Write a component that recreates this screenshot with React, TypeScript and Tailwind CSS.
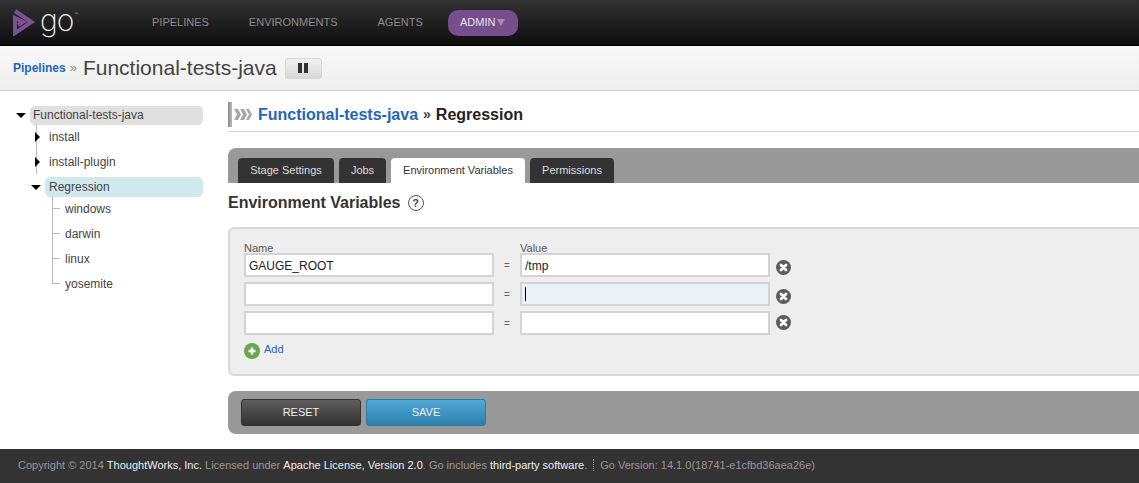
import React from "react";

const font = { fontFamily: '"Liberation Sans", Arial, sans-serif' };

function Down({ className = "" }: { className?: string }) {
  return <svg width="10" height="5" viewBox="0 0 10 5" className={className}><path d="M0 0H10L5 5Z" fill="#000" /></svg>;
}
function Right() {
  return <svg width="5" height="10" viewBox="0 0 5 10"><path d="M0 0L5 5L0 10Z" fill="#000" /></svg>;
}
function Close() {
  return (
    <svg width="15" height="15" viewBox="0 0 15 15" className="shrink-0">
      <circle cx="7.5" cy="7.5" r="7.5" fill="#5c5c5c" />
      <path d="M5 5L10 10M10 5L5 10" stroke="#fff" strokeWidth="2.8" strokeLinecap="round" />
    </svg>
  );
}
function Leaf({ label, last }: { label: string; last?: boolean }) {
  return (
    <div className="relative h-[25px] pl-[13px] flex items-center text-[12px] text-[#444]">
      <span className={`absolute left-0 top-0 w-px bg-[#bbb] ${last ? "h-[13px]" : "h-full"}`} />
      <span className="absolute left-0 top-[12px] w-[8px] h-px bg-[#bbb]" />
      {label}
    </div>
  );
}
function Row({ name = "", value = "", focus = false, className = "", iconUp = false }: { name?: string; value?: string; focus?: boolean; className?: string; iconUp?: boolean }) {
  const input = "w-[250px] h-[24px] border-2 border-[#d4d4d4] pl-[3px] flex items-center text-[12px] text-[#222]";
  return (
    <div className={`flex items-center ${className}`}>
      <div className={`${input} bg-white`}><span className="mt-[2px]">{name}</span></div>
      <div className="w-[26px] text-center text-[10px] text-[#666]">=</div>
      <div className={`${input} ${focus ? "bg-[#eaf2f9] border-[#ccd2d6]" : "bg-white"}`}>
        {focus ? <span className="w-px h-[14px] bg-black" /> : <span className="mt-[2px]">{value}</span>}
      </div>
      <div className={`ml-[6px] flex ${iconUp ? "-mt-[2px]" : "mt-[5px]"}`}><Close /></div>
    </div>
  );
}
function Tab({ label, active, w }: { label: string; active?: boolean; w: string }) {
  return (
    <div className={`h-[25px] rounded-t-[4px] flex items-center justify-center text-[11px] ${w} ${active ? "bg-white text-[#333]" : "bg-[#333] text-[#ddd]"}`}>
      {label}
    </div>
  );
}

export default function App() {
  return (
    <div style={font} className="w-[1139px] h-[483px] overflow-hidden bg-white flex flex-col">
      <header className="h-[46px] shrink-0 bg-gradient-to-b from-[#323232] to-[#0f0f0f] border-b border-[#000] flex items-center relative">
        <svg width="24" height="28" viewBox="0 0 24 28" className="ml-[12px] mt-[-1px]">
          <path d="M3 3L19.5 14L3 25V10L11 14L6 17" fill="none" stroke="#7b5391" strokeWidth="4" />
        </svg>
        <span className="ml-[4px] -mt-[6px] w-[34px] text-[30px] leading-none text-[#f0f0f0] tracking-[-1px] font-['Inter'] font-extralight">go</span>
        <span className="self-start mt-[11px] w-[4px] text-[4px] text-[#aaa]">™</span>
        <nav className="flex items-center text-[11px] text-[#8d8d8d]">
          <span className="ml-[74px]">PIPELINES</span>
          <span className="ml-[40px]">ENVIRONMENTS</span>
          <span className="ml-[40px]">AGENTS</span>
          <span className="ml-[25px] w-[70px] h-[26px] rounded-[10px] bg-[#764e8c] text-[#e8e0ec] flex items-center justify-center gap-[2px]">
            ADMIN
            <svg width="8" height="7" viewBox="0 0 8 7"><path d="M0 0H8L4 7Z" fill="#a58ab4" /></svg>
          </span>
        </nav>
      </header>

      <div className="h-[45px] shrink-0 bg-gradient-to-b from-[#f9f9f9] to-[#eeeeee] border-b border-[#cfcfcf] flex items-center pl-[13px] relative">
        <span className="text-[12px] font-bold text-[#1f66b9]">Pipelines</span>
        <span className="ml-[4px] text-[13px] text-[#888]">»</span>
        <span className="ml-[6px] text-[21px] text-[#444]">Functional-tests-java</span>
        <span className="ml-[8px] w-[37px] h-[21px] rounded-[3px] border border-[#d6d6d6] bg-gradient-to-b from-[#f2f2f2] to-[#d8d8d8] flex items-center justify-center gap-[2px]">
          <span className="w-[4px] h-[10px] bg-[#333]" />
          <span className="w-[4px] h-[10px] bg-[#333]" />
        </span>
      </div>

      <div className="flex-1 flex min-h-0">
        <aside className="w-[228px] shrink-0 pt-[15px] pl-[16px]">
          <div className="flex items-center w-[187px]">
            <Down className="shrink-0" />
            <div className="ml-[4px] w-[173px] h-[19px] rounded-[5px] bg-[#e0e0e0] pl-[3px] pb-[2px] flex items-center text-[12px] text-[#444]">Functional-tests-java</div>
          </div>
          <div className="relative -mt-[1px] ml-[20px] w-[167px]">
            <span className="absolute left-0 top-0 h-[50px] w-px bg-[#bbb]" />
            <div className="relative h-[25px] flex items-center pl-[13px] text-[12px] text-[#444]">
              <span className="absolute -left-[1px] top-[8px] flex"><Right /></span>install
            </div>
            <div className="relative h-[25px] flex items-center pl-[13px] text-[12px] text-[#444]">
              <span className="absolute -left-[1px] top-[8px] flex"><Right /></span>install-plugin
            </div>
            <div className="relative h-[20px] mt-[3px] flex items-center">
              <span className="absolute -left-[5px] top-[8px] flex"><Down /></span>
              <div className="ml-[9px] w-[158px] h-[20px] rounded-[5px] bg-[#d0e9ef] pl-[4px] flex items-center text-[12px] text-[#444]">Regression</div>
            </div>
            <div className="ml-[16px] -mt-[1px]">
              <Leaf label="windows" />
              <Leaf label="darwin" />
              <Leaf label="linux" />
              <Leaf label="yosemite" last />
            </div>
          </div>
        </aside>

        <main className="w-[925px] shrink-0 pt-[10px]">
          <div className="h-[27px] flex items-center">
            <span className="w-[4px] h-[25px] bg-gradient-to-r from-[#888] to-[#bbb]" />
            <svg width="18" height="11" viewBox="0 0 18 11" className="ml-[2px]">
              <path d="M0 0H4L7 5.5L4 11H0L3 5.5Z M6 0H10L13 5.5L10 11H6L9 5.5Z M12 0H15L18 5.5L15 11H12L15 5.5Z" fill="#a8a8a8" />
            </svg>
            <span className="ml-[6px] text-[16px] font-bold text-[#1f66b9]">Functional-tests-java</span>
            <span className="ml-[5px] text-[14px] font-bold text-[#444]">»</span>
            <span className="ml-[5px] text-[16px] font-bold text-[#222]">Regression</span>
          </div>
          <div className="h-px bg-[#d0d0d0] mt-[3px]" />

          <div className="mt-[16px] h-[35px] bg-[#999] rounded-tl-[8px] flex items-end pl-[10px] gap-[5px]">
            <Tab label="Stage Settings" w="w-[96px]" />
            <Tab label="Jobs" w="w-[47px]" />
            <Tab label="Environment Variables" active w="w-[134px]" />
            <Tab label="Permissions" w="w-[84px]" />
          </div>

          <div className="mt-[10px] flex items-center h-[20px]">
            <span className="text-[16px] font-bold text-[#333]">Environment Variables</span>
            <span className="ml-[7px] w-[16px] h-[16px] rounded-full border border-[#555] flex items-center justify-center text-[11px] font-bold text-[#444]">?</span>
          </div>

          <section className="mt-[14px] h-[149px] bg-[#eeeeee] border-2 border-[#d8d8d8] rounded-l-[6px] pl-[14px] pt-[14px]">
            <div className="flex h-[10px] items-center text-[11px] text-[#555]">
              <span className="w-[276px]">Name</span>
              <span>Value</span>
            </div>
            <Row name="GAUGE_ROOT" value="/tmp" />
            <Row focus className="mt-[5px]" />
            <Row iconUp className="mt-[5px]" />
            <div className="mt-[8px] flex items-center">
              <svg width="16" height="16" viewBox="0 0 16 16">
                <circle cx="8" cy="8" r="8" fill="#69a84f" />
                <path d="M8 4.5V11.5M4.5 8H11.5" stroke="#fff" strokeWidth="2.4" />
              </svg>
              <span className="ml-[4px] -mt-[3px] text-[11px] text-[#1f66b9]">Add</span>
            </div>
          </section>

          <div className="mt-[15px] h-[43px] bg-[#999] rounded-l-[8px] flex items-center pl-[13px] gap-[5px]">
            <span className="w-[120px] h-[27px] rounded-[3px] border border-[#333] bg-gradient-to-b from-[#5e5e5e] to-[#333] text-[#eee] text-[11px] flex items-center justify-center">RESET</span>
            <span className="w-[120px] h-[27px] rounded-[3px] border border-[#2a7ba8] bg-gradient-to-b from-[#4fa8d8] to-[#2d80ab] text-[#eee] text-[11px] flex items-center justify-center">SAVE</span>
          </div>
        </main>
      </div>

      <footer className="h-[34px] shrink-0 bg-[#333] flex items-center pb-[2px] pl-[18px] text-[11px] text-[#999] whitespace-nowrap">
        Copyright © 2014&nbsp;<span className="text-[#eee]">ThoughtWorks, Inc.</span>&nbsp;Licensed under&nbsp;
        <span className="text-[#eee]">Apache License, Version 2.0</span>.&nbsp;Go includes&nbsp;
        <span className="text-[#eee]">third-party software</span>.
        <span className="ml-[6px] mr-[6px] h-[12px] border-l border-dotted border-[#999]" />
        Go Version: 14.1.0(18741-e1cfbd36aea26e)
      </footer>
    </div>
  );
}
